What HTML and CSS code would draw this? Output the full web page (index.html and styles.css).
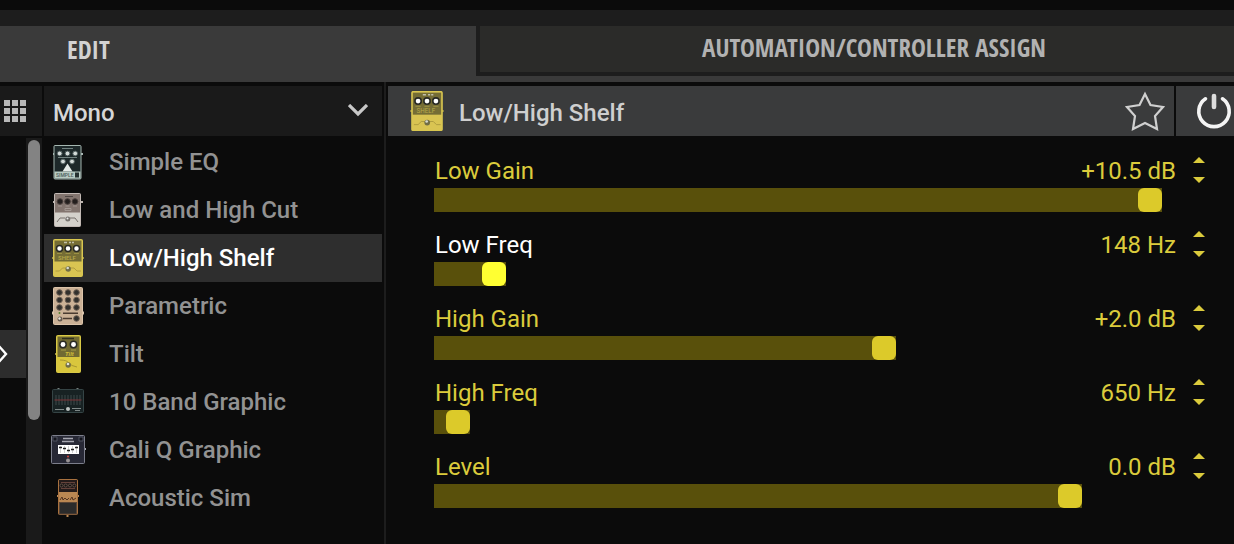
FILE: index.html
```
<!DOCTYPE html>
<html lang="en">
<head>
  <meta charset="UTF-8">
  <meta name="viewport" content="width=device-width, initial-scale=1.0">
  <title>Low/High Shelf</title>
  <link rel="stylesheet" href="styles.css">
</head>
<body>
  <!-- Pedal artwork, shared by the model list and the panel header -->
  <svg class="sprites" aria-hidden="true">
    <defs>
      <symbol id="pedal-simple" viewBox="0 0 36 40">
        <path d="M3 12h30" stroke="#a9b8b4" stroke-width="2"/>
        <rect x="4" y="3.5" width="27" height="33.5" rx="1" fill="#1d2829" stroke="#a5b7b1"/>
        <path d="M12 6.5h11M8 15.5h19" stroke="#71817f"/>
        <g fill="#d3dad8" stroke="#4d5b5b">
          <circle cx="9.7" cy="11.5" r="2.4"/><circle cx="17.5" cy="11.5" r="2.4"/><circle cx="25.2" cy="11.5" r="2.4"/>
          <circle cx="13" cy="19.5" r="2.4"/><circle cx="22" cy="19.5" r="2.4"/>
        </g>
        <path d="M17.5 21.5l5 8h-10z" fill="#e4eae7"/>
        <rect x="4.5" y="29.5" width="26" height="7" fill="#b9cbc3"/>
        <text x="6" y="35" font-size="5" fill="#4b5c58">SIMPLE</text>
        <path d="M25 30.5h4v5h-4z" fill="#26302f"/>
      </symbol>

      <symbol id="pedal-cut" viewBox="0 0 36 40">
        <path d="M3 12h30" stroke="#bcb5b0" stroke-width="2"/>
        <rect x="4.5" y="3.5" width="26" height="33" rx="1" fill="#d4d1cb" stroke="#c2b9b4"/>
        <rect x="5" y="4" width="25" height="18.5" fill="#83756f"/>
        <path d="M15 6.5h8" stroke="#4d4542"/>
        <g fill="#241f1e" stroke="#4a403d">
          <circle cx="10" cy="11.5" r="2.8"/><circle cx="17.5" cy="11.5" r="2.8"/><circle cx="25" cy="11.5" r="2.8"/>
        </g>
        <path d="M8 16h4M15.5 16h4M23 16h4M15 18.5h6v2h-6z" stroke="#aaa09b" stroke-width=".8" fill="none"/>
        <path d="M7 32l3-4h5M20 28h5l3 4" stroke="#77716c" fill="none"/>
        <circle cx="17.8" cy="29" r="2.5" fill="#77736f"/><circle cx="17.5" cy="28.5" r="1" fill="#e8e8e8"/>
      </symbol>

      <symbol id="pedal-shelf" viewBox="0 0 36 40">
        <path d="M2 20h32" stroke="#9a8f42" stroke-width="2"/>
        <rect x="3.5" y="1.5" width="29" height="37" rx="1" fill="#d9c452" stroke="#d9c74f"/>
        <rect x="4.5" y="2.5" width="27" height="21" fill="#756d35"/>
        <path d="M14 4.5h3M19 4.5h2M22 4.5h2" stroke="#c2c0aa" stroke-width="1.5"/>
        <g fill="#fff" stroke="#292a24" stroke-width="1.5">
          <circle cx="9.5" cy="10.5" r="3"/><circle cx="18" cy="10.5" r="3"/><circle cx="26.5" cy="10.5" r="3"/>
        </g>
        <path d="M7 15.5h5M15.5 15.5h5M24 15.5h5" stroke="#a69b48" stroke-width=".8"/>
        <text x="8" y="22" font-size="6" fill="#b9aa4a">SHELF</text>
        <path d="M5.5 33h4l3-3h4M20 30h4l3 3h4" stroke="#a8963b" stroke-width=".8" fill="none"/>
        <circle cx="18.2" cy="31" r="2.7" fill="#716d45"/><circle cx="17.7" cy="30" r="1.3" fill="#d7d9ce"/>
      </symbol>

      <symbol id="pedal-parametric" viewBox="0 0 36 40">
        <path d="M2 27h32" stroke="#d6c3ad" stroke-width="3"/>
        <rect x="3.5" y="1.5" width="29" height="37" rx="1" fill="#cbb196" stroke="#dcc4aa"/>
        <g fill="#32302d" stroke="#6d5f54">
          <circle cx="9.5" cy="6.5" r="2.8"/><circle cx="18" cy="6.5" r="2.8"/><circle cx="26.5" cy="6.5" r="2.8"/>
          <circle cx="9.5" cy="14" r="2.8"/><circle cx="18" cy="14" r="2.8"/><circle cx="26.5" cy="14" r="2.8"/>
          <circle cx="9.5" cy="21.5" r="2.8"/><circle cx="18" cy="21.5" r="2.8"/><circle cx="26.5" cy="21.5" r="2.8"/>
          <circle cx="26.5" cy="32.5" r="2.8"/>
        </g>
        <path d="M13 27.2h15M13 32.5h9" stroke="#4a3b30" stroke-width="1.5"/>
        <circle cx="9.5" cy="27" r="1" fill="#55822d"/>
        <circle cx="10" cy="33" r="2.5" fill="#65594e"/><circle cx="9.5" cy="32.5" r="1.2" fill="#eee6dc"/>
      </symbol>

      <symbol id="pedal-tilt" viewBox="0 0 36 40">
        <path d="M5 20h26" stroke="#9a8f42" stroke-width="2"/>
        <rect x="6.5" y="1.5" width="24" height="37" rx="1" fill="#d9c63d" stroke="#d9c945"/>
        <rect x="7.5" y="2.5" width="22" height="20.5" fill="#716a32"/>
        <path d="M12 4.5h12" stroke="#30301f" stroke-width="1.5"/>
        <g fill="#fff" stroke="#292a24" stroke-width="1.5">
          <circle cx="13" cy="10.5" r="3.2"/><circle cx="23.5" cy="10.5" r="3.2"/>
        </g>
        <path d="M11 16h5M21 16h5" stroke="#a69b48"/>
        <text x="15" y="22" font-size="6" font-weight="700" font-style="italic" fill="#d0bd39">Tilt</text>
        <path d="M10 26q7 0 9 3t8 4" stroke="#9d8b29" stroke-width=".8" fill="none"/>
        <circle cx="18.2" cy="31" r="2.7" fill="#716d45"/><circle cx="18" cy="30" r="1.3" fill="#e3e4da"/>
      </symbol>

      <symbol id="pedal-tenband" viewBox="0 0 36 40">
        <path d="M8.5 6v3M27.5 6v3" stroke="#75807e" stroke-width="2"/>
        <rect x="2.5" y="7.5" width="31" height="23" rx="1" fill="#182223" stroke="#354445"/>
        <path d="M6 13v10M9 13v10M12 13v10M15 13v10M18 13v10M21 13v10M24 13v10M27 13v10M30 13v10" stroke="#3c484a"/>
        <path d="M4.5 18h27" stroke="#7e3437"/>
        <path d="M5 27.5h9M22 26.5h9M25 28.5h5" stroke="#7f8988" stroke-width="1.2"/>
        <circle cx="18" cy="27" r="2" fill="#bfc4c2"/>
      </symbol>

      <symbol id="pedal-cali" viewBox="0 0 36 40">
        <path d="M1 19h35" stroke="#a4a6b0" stroke-width="2"/>
        <rect x="1.5" y="5.5" width="33" height="28" rx="1" fill="#272835" stroke="#7c7e8b"/>
        <path d="M3 7h4v4H3zM29 7h4v4h-4z" fill="#13141c" stroke="#515361"/>
        <path d="M13 8.5h10M12 11.5h12" stroke="#a5a5af" stroke-width="1.3"/>
        <rect x="8" y="15" width="21" height="9" fill="#fff"/>
        <path d="M10.5 16v7M14.5 16v7M18.5 16v7M22.5 16v7M26.5 16v7" stroke="#bbb" stroke-width=".7"/>
        <path d="M9 17.5h3M13 18.5h3M17 20.5h3M21 19.5h3M25 17.5h3" stroke="#222" stroke-width="1.6"/>
        <circle cx="18" cy="26.5" r="1" fill="#d6463e"/><circle cx="18" cy="30.5" r="2" fill="#989294"/>
      </symbol>

      <symbol id="pedal-acoustic" viewBox="0 0 36 40">
        <path d="M7 18h22M17.5 36v3" stroke="#b98551" stroke-width="2"/>
        <rect x="8.5" y="1.5" width="19" height="35" rx="1" fill="#ba8752" stroke="#a8713f"/>
        <rect x="9" y="2" width="18" height="12" fill="#241b1a"/>
        <path d="M11 4.5h14M11 10.5h14" stroke="#764d43" stroke-width=".8"/>
        <g fill="#111" stroke="#725c50" stroke-width=".8">
          <circle cx="11.5" cy="7.5" r="1.5"/><circle cx="15.7" cy="7.5" r="1.5"/><circle cx="20" cy="7.5" r="1.5"/><circle cx="24.3" cy="7.5" r="1.5"/>
        </g>
        <path d="M10 22l2-3 1 3 2-2 2 2 2-2M20 22l2-3 1 3 3-2" stroke="#533421" fill="none"/>
        <rect x="9.5" y="24.5" width="17" height="11.5" fill="#2b2b2b" stroke="#594536"/>
      </symbol>
    </defs>
  </svg>

  <nav class="tabs">
    <button class="tab tab-edit" type="button">EDIT</button>
    <button class="tab tab-assign" type="button">AUTOMATION/CONTROLLER ASSIGN</button>
  </nav>

  <main class="workspace">
    <!-- Model browser -->
    <aside class="browser">
      <div class="browser-head">
        <button class="grid-button" type="button" aria-label="Grid view">
          <svg width="22" height="22" viewBox="0 0 22 22" fill="#b9b9b9">
            <path d="M0 0h6v6H0zM8 0h6v6H8zM16 0h6v6h-6zM0 8h6v6H0zM8 8h6v6H8zM16 8h6v6h-6zM0 16h6v6H0zM8 16h6v6H8zM16 16h6v6h-6z"/>
          </svg>
        </button>
        <div class="category">
          <select class="category-select" aria-label="Category">
            <option>Mono</option>
            <option>Stereo</option>
          </select>
          <svg class="category-arrow" width="20" height="14" viewBox="0 0 20 14">
            <path d="M1 1l9 9 9-9" fill="none" stroke="#c8c8c8" stroke-width="3.2"/>
          </svg>
        </div>
      </div>
      <div class="browser-body">
        <div class="rail">
          <button class="rail-button" type="button" aria-label="Expand">
            <svg width="8" height="20" viewBox="0 0 8 20">
              <path d="M-2 1l8 9-8 9" fill="none" stroke="#fff" stroke-width="2.4"/>
            </svg>
          </button>
        </div>
        <div class="scroll-track"><div class="scroll-thumb"></div></div>
        <ul class="models">
          <li><button class="model" type="button"><svg class="pedal"><use href="#pedal-simple"/></svg>Simple EQ</button></li>
          <li><button class="model" type="button"><svg class="pedal"><use href="#pedal-cut"/></svg>Low and High Cut</button></li>
          <li><button class="model selected" type="button"><svg class="pedal"><use href="#pedal-shelf"/></svg>Low/High Shelf</button></li>
          <li><button class="model" type="button"><svg class="pedal"><use href="#pedal-parametric"/></svg>Parametric</button></li>
          <li><button class="model" type="button"><svg class="pedal"><use href="#pedal-tilt"/></svg>Tilt</button></li>
          <li><button class="model" type="button"><svg class="pedal"><use href="#pedal-tenband"/></svg>10 Band Graphic</button></li>
          <li><button class="model" type="button"><svg class="pedal"><use href="#pedal-cali"/></svg>Cali Q Graphic</button></li>
          <li><button class="model" type="button"><svg class="pedal"><use href="#pedal-acoustic"/></svg>Acoustic Sim</button></li>
        </ul>
      </div>
    </aside>

    <!-- Parameters of the selected model -->
    <section class="editor">
      <header class="editor-head">
        <div class="editor-title">
          <svg class="pedal-large"><use href="#pedal-shelf"/></svg>
          <h1>Low/High Shelf</h1>
          <button class="star" type="button" aria-label="Favorite">
            <svg width="40" height="40" viewBox="0 0 40 40">
              <path d="M20 3l5.5 11L38 16l-8 9 2 13-12-6-12 6 2-13-8-9 12.5-2z" fill="none" stroke="#d0d0d0" stroke-width="2.2"/>
            </svg>
          </button>
        </div>
        <button class="power" type="button" aria-label="Bypass">
          <svg width="36" height="36" viewBox="0 0 36 36" fill="none" stroke="#f4f4f4" stroke-linecap="round">
            <path d="M9.5 5.8a15.2 15.2 0 1 0 17 0" stroke-width="3.6"/>
            <path d="M18 3v11" stroke="#ddd" stroke-width="4.6"/>
          </svg>
        </button>
      </header>

      <div class="params">
        <div class="param">
          <div class="param-head">
            <label for="lowGain">Low Gain</label>
            <output for="lowGain">+10.5 dB</output>
            <div class="stepper">
              <button class="step up" type="button" aria-label="Low Gain up"></button>
              <button class="step down" type="button" aria-label="Low Gain down"></button>
            </div>
          </div>
          <input class="slider" id="lowGain" type="range" min="-12" max="12" step="0.1" value="10.5" style="--pos: 0.9375">
        </div>
        <div class="param active">
          <div class="param-head">
            <label for="lowFreq">Low Freq</label>
            <output for="lowFreq">148 Hz</output>
            <div class="stepper">
              <button class="step up" type="button" aria-label="Low Freq up"></button>
              <button class="step down" type="button" aria-label="Low Freq down"></button>
            </div>
          </div>
          <input class="slider" id="lowFreq" type="range" min="21" max="2000" step="1" value="148" style="--pos: 0.0642">
        </div>
        <div class="param">
          <div class="param-head">
            <label for="highGain">High Gain</label>
            <output for="highGain">+2.0 dB</output>
            <div class="stepper">
              <button class="step up" type="button" aria-label="High Gain up"></button>
              <button class="step down" type="button" aria-label="High Gain down"></button>
            </div>
          </div>
          <input class="slider" id="highGain" type="range" min="-12" max="12" step="0.1" value="2" style="--pos: 0.5833">
        </div>
        <div class="param">
          <div class="param-head">
            <label for="highFreq">High Freq</label>
            <output for="highFreq">650 Hz</output>
            <div class="stepper">
              <button class="step up" type="button" aria-label="High Freq up"></button>
              <button class="step down" type="button" aria-label="High Freq down"></button>
            </div>
          </div>
          <input class="slider" id="highFreq" type="range" min="500" max="10000" step="10" value="650" style="--pos: 0.0158">
        </div>
        <div class="param">
          <div class="param-head">
            <label for="level">Level</label>
            <output for="level">0.0 dB</output>
            <div class="stepper">
              <button class="step up" type="button" aria-label="Level up"></button>
              <button class="step down" type="button" aria-label="Level down"></button>
            </div>
          </div>
          <input class="slider" id="level" type="range" min="-59" max="12" step="0.1" value="0" style="--pos: 0.831">
        </div>
      </div>
    </section>
  </main>
</body>
</html>
```
FILE: styles.css
```
* {
  box-sizing: border-box;
}

body {
  margin: 0;
  min-height: 100vh;
  display: flex;
  flex-direction: column;
  background-color: #0b0b0b;
  color: #999;
  font-family: Roboto, sans-serif;
  font-size: 24px;
}

button {
  padding: 0;
  border: none;
  background: none;
  color: inherit;
  font: inherit;
  cursor: pointer;
}

svg {
  display: block;
  flex: none;
}

.sprites {
  position: absolute;
  width: 0;
  height: 0;
}

/* Tabs */
.tabs {
  display: flex;
  margin-top: 10px;
  border-top: 16px solid #1d1d1d;
  background-color: #3a3a3a;
  height: 72px;
}

.tab {
  font-family: "Open Sans Condensed", "Liberation Sans Narrow", "Roboto Condensed", Roboto, sans-serif;
  font-size: 25px;
  font-weight: 700;
}

.tab-edit {
  flex: none;
  width: 476px;
  padding: 0 0 10px 67px;
  text-align: left;
  color: #d2d2d2;
}

.tab-assign {
  flex: 1;
  height: 50px;
  padding: 0 0 4px 34px;
  border-left: 4px solid #1d1d1d;
  border-bottom: 4px solid #1d1d1d;
  background-color: #2b2b29;
  color: #b2b2b2;
}

.workspace {
  flex: 1;
  display: flex;
}

/* Model browser */
.browser {
  flex: none;
  width: 386px;
  display: flex;
  flex-direction: column;
  padding: 4px 2px 0 0;
  border-right: 2px solid #1d1d1d;
}

.browser-head {
  display: flex;
  gap: 2px;
  height: 50px;
}

.grid-button {
  width: 42px;
  padding-left: 4px;
  background-color: #1a1a1a;
}

.category {
  position: relative;
  flex: 1;
}

.category-select {
  appearance: none;
  width: 100%;
  height: 100%;
  padding: 4px 40px 0 9px;
  border: none;
  background-color: #1a1a1a;
  color: #d6d6d6;
  font: inherit;
  font-weight: 500;
}

.category-arrow {
  position: absolute;
  top: 18px;
  right: 14px;
  pointer-events: none;
}

.browser-body {
  flex: 1;
  display: flex;
  padding-top: 2px;
}

.rail {
  width: 26px;
  padding-top: 192px;
}

.rail-button {
  width: 100%;
  height: 48px;
  background-color: #2d2d2d;
}

.scroll-track {
  width: 16px;
  padding: 2px;
  background-color: #1a1a1a;
}

.scroll-thumb {
  height: 280px;
  border-radius: 6px;
  background-color: #838383;
}

.models {
  flex: 1;
  margin: 0;
  padding: 0 0 0 2px;
  list-style: none;
}

.model {
  display: flex;
  align-items: center;
  gap: 23px;
  width: 100%;
  height: 48px;
  padding-left: 6px;
  text-align: left;
  font-weight: 500;
  color: #929292;
}

.model.selected {
  background-color: #2e2e2e;
  color: #fff;
}

.pedal {
  width: 36px;
  height: 40px;
}

.pedal-large {
  width: 38px;
  height: 42px;
}

/* Editor */
.editor {
  flex: 1;
  padding: 4px 0 0 2px;
}

.editor-head {
  display: flex;
  gap: 2px;
  height: 50px;
}

.editor-title {
  flex: 1;
  display: flex;
  align-items: center;
  padding: 0 9px 0 20px;
  background-color: #3a3b3c;
}

.editor-title h1 {
  flex: 1;
  margin: 0;
  padding: 4px 0 0 13px;
  color: #cfcfcf;
  font-size: 24px;
  font-weight: 500;
}

.power {
  width: 58px;
  padding-left: 20px;
  background-color: #3a3b3c;
}

.params {
  display: flex;
  flex-direction: column;
  gap: 16px;
  padding: 18px 25px 0 46px;
  color: #dbcb3c;
}

.param-head {
  display: flex;
  align-items: center;
  height: 34px;
  padding: 0 4px 0 1px;
}

.param-head label {
  flex: 1;
}

.param.active label {
  color: #fff;
}

.stepper {
  display: flex;
  flex-direction: column;
  gap: 14px;
  margin: 0 0 2px 17px;
}

.step {
  width: 12px;
  height: 6px;
  background-color: #dbcb3c;
}

.step.up {
  clip-path: polygon(50% 0, 100% 100%, 0 100%);
}

.step.down {
  clip-path: polygon(0 0, 100% 0, 50% 100%);
}

/* Filled bar runs under the thumb up to its right edge */
.slider {
  appearance: none;
  display: block;
  width: 100%;
  height: 24px;
  margin: 0;
  background: linear-gradient(#59500b, #59500b) no-repeat;
  background-size: calc((100% - 24px) * var(--pos) + 24px) 100%;
  cursor: pointer;
}

.slider::-webkit-slider-thumb {
  appearance: none;
  width: 24px;
  height: 24px;
  border-radius: 6px;
  background-color: #dcca2a;
}

.param.active .slider::-webkit-slider-thumb {
  background-color: #ffff32;
}
```
